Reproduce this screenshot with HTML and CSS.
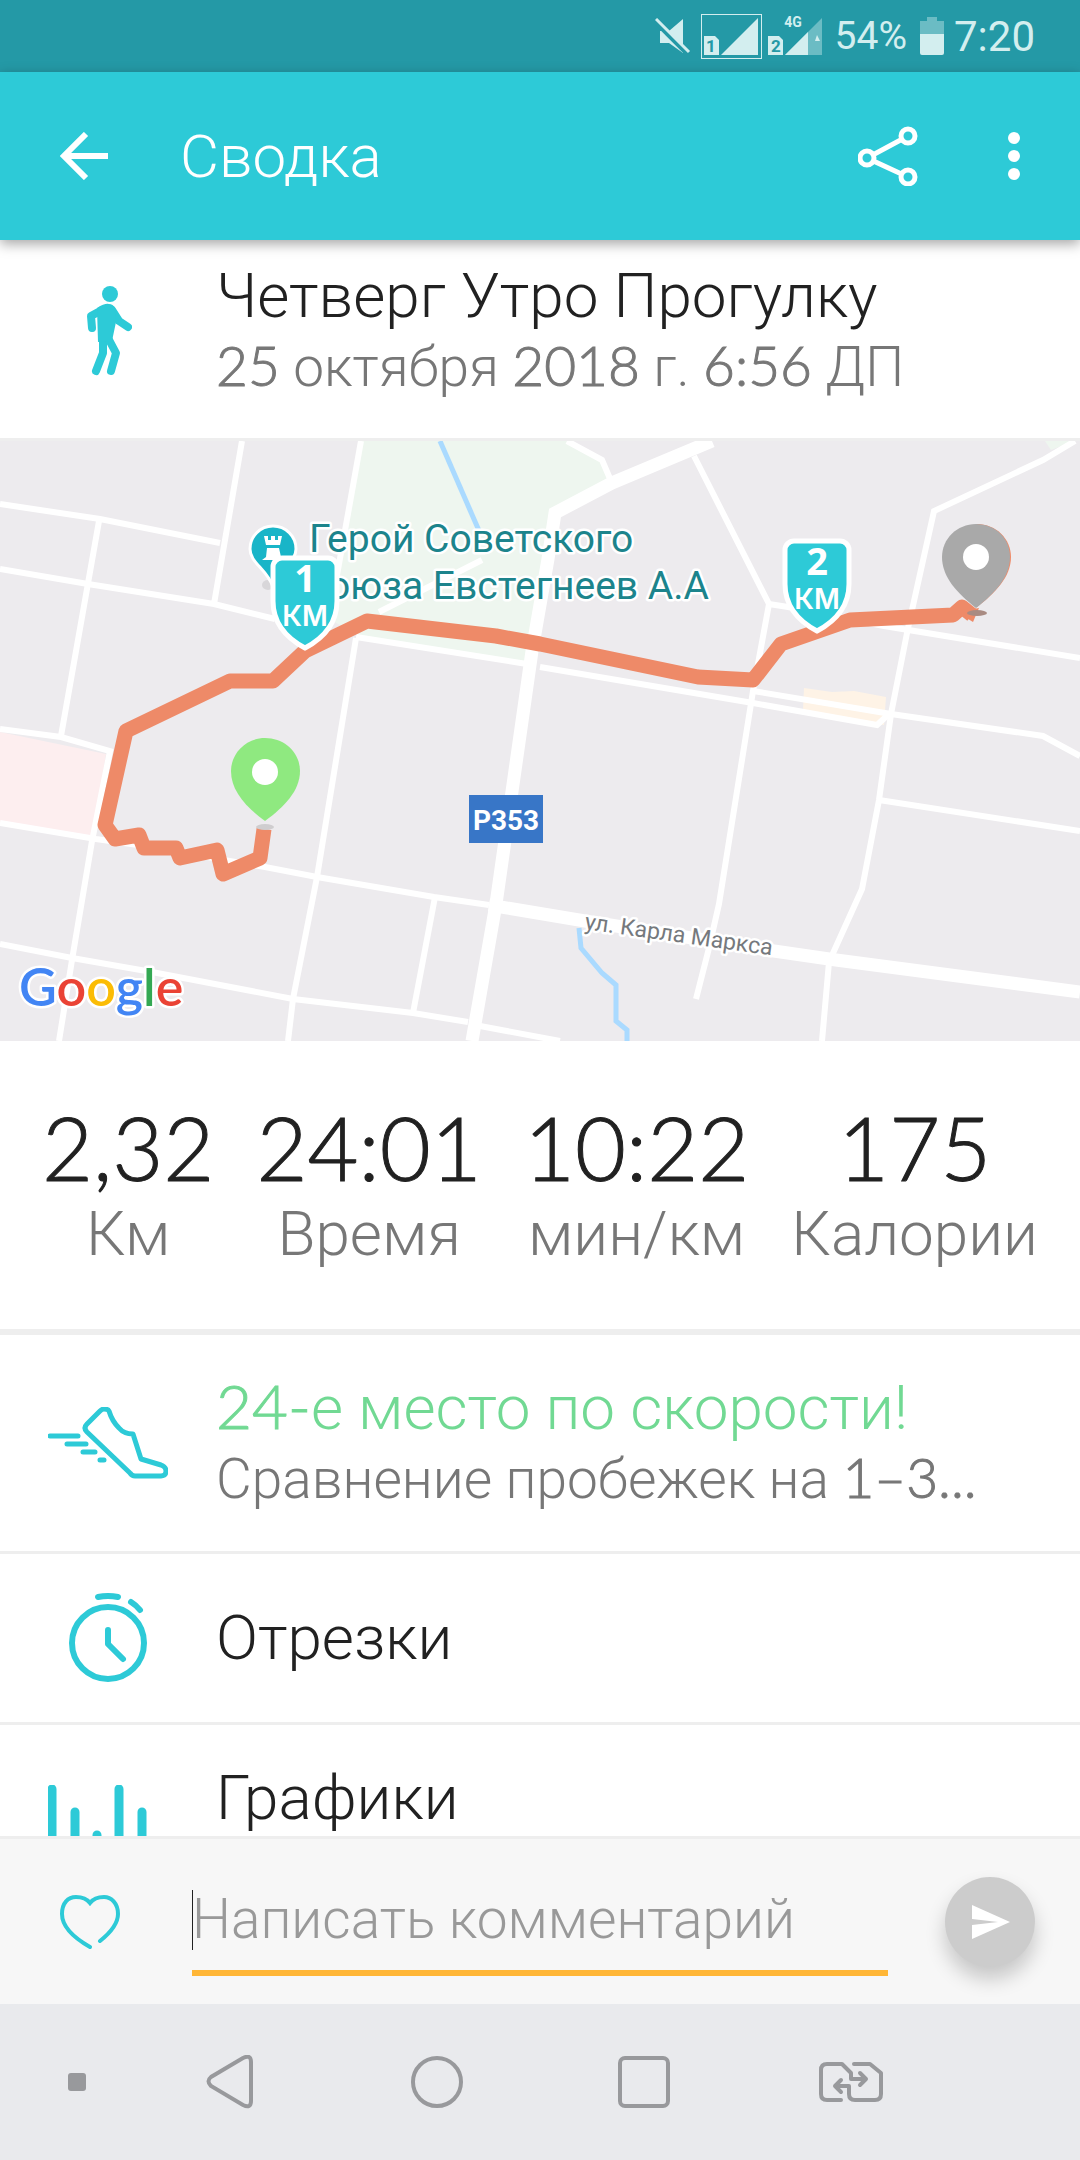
FILE: index.html
```html
<!DOCTYPE html>
<html lang="ru">
<head>
  <meta charset="UTF-8">
  <title>Сводка</title>
  <meta name="viewport" content="width=device-width, initial-scale=1.0">
  <link rel="stylesheet" href="styles.css">
</head>
<body>

  <!-- System status bar -->
  <div class="status-bar">
    <svg class="status-mute" width="36" height="36" viewBox="0 0 36 36">
      <path d="M5 13h9L28 1v34L14 25H5z" fill="#d3eeef"/>
      <path d="M0 4l33 33" stroke="#2499a6" stroke-width="4"/>
      <path d="M1 1l33 33" stroke="#d3eeef" stroke-width="3"/>
    </svg>
    <svg class="status-sim" width="61" height="45" viewBox="0 0 61 45">
      <rect x="0.5" y="0.5" width="60" height="44" fill="none" stroke="#d3eeef"/>
      <path d="M3 22h11l4 4v15H3z" fill="#d3eeef"/>
      <path d="M20 41L57 4v37z" fill="#d3eeef"/>
      <text x="10" y="38" class="sim-number">1</text>
    </svg>
    <svg class="status-sim" width="55" height="45" viewBox="0 0 55 45">
      <path d="M0 22h11l4 4v15H0z" fill="#d3eeef"/>
      <path d="M17 41L54 4v37z" fill="#6bbcc4"/>
      <path d="M17 41l23-23v23z" fill="#d3eeef"/>
      <path d="M47 27l2-6 3 6z" fill="#d3eeef"/>
      <text x="8" y="38" class="sim-number">2</text>
      <text x="25" y="13" class="sim-network">4G</text>
    </svg>
    <span class="battery-level">54%</span>
    <svg class="status-battery" width="24" height="38" viewBox="0 0 24 38">
      <path d="M7 0h10v4h7v14H0V4h7z" fill="#6bbcc4"/>
      <path d="M0 17h24v19a2 2 0 0 1-2 2H2a2 2 0 0 1-2-2z" fill="#d3eeef"/>
    </svg>
    <span class="clock">7:20</span>
  </div>

  <!-- App bar -->
  <header class="app-bar">
    <button class="icon-button back-button" aria-label="Назад">
      <svg width="48" height="48" viewBox="0 0 48 48">
        <path d="M48 24H6M26 2L4 24l22 22" fill="none" stroke="#fff" stroke-width="6"/>
      </svg>
    </button>
    <h1 class="app-title">Сводка</h1>
    <button class="icon-button" aria-label="Поделиться">
      <svg width="60" height="60" viewBox="0 0 60 60">
        <path d="M50 10L9 32l41 19" fill="none" stroke="#fff" stroke-width="5"/>
        <circle cx="50" cy="10" r="7" fill="#2dcad7" stroke="#fff" stroke-width="5"/>
        <circle cx="9" cy="32" r="7" fill="#2dcad7" stroke="#fff" stroke-width="5"/>
        <circle cx="50" cy="51" r="7" fill="#2dcad7" stroke="#fff" stroke-width="5"/>
      </svg>
    </button>
    <button class="icon-button menu-button" aria-label="Меню">
      <svg width="12" height="48" viewBox="0 0 12 48">
        <circle cx="6" cy="6" r="6" fill="#fff"/>
        <circle cx="6" cy="24" r="6" fill="#fff"/>
        <circle cx="6" cy="42" r="6" fill="#fff"/>
      </svg>
    </button>
  </header>

  <main class="content">

    <!-- Workout name and date -->
    <section class="row workout-row">
      <div class="row-icon">
        <svg width="48" height="90" viewBox="0 0 48 90">
          <g fill="none" stroke="#2dcad7" stroke-width="8" stroke-linecap="round" stroke-linejoin="round">
            <path d="M18 24L7 30l1 12"/>
            <path d="M28 24l7 11 9 6"/>
            <path d="M19 50v17l-7 18"/>
            <path d="M23 50l9 17-5 18"/>
          </g>
          <path d="M13 22q8-5 12-4 4 0 6 4l1 14-4 19-14 1z" fill="#2dcad7"/>
          <circle cx="26" cy="8" r="8" fill="#2dcad7"/>
        </svg>
      </div>
      <div class="row-text">
        <h2 class="row-title">Четверг Утро Прогулку</h2>
        <p class="row-subtitle"><span class="num">25</span> октября <span class="num">2018</span> г. <span class="num">6:56</span> ДП</p>
      </div>
    </section>

    <!-- Route map -->
    <svg class="map" viewBox="0 0 1080 600">
      <rect width="1080" height="600" fill="#edebee"/>
      <path d="M361 0h206l35 19 6 20-53 33-7 46-14 90-7 14-161-24-37-20z" fill="#eef6ef"/>
      <path d="M0 291l106 22-13 83-93-15z" fill="#fdeeef"/>
      <path d="M804 247l28 4 22-1 32 6-2 28-81-15z" fill="#fef3e6"/>
      <path d="M1045 0h30l-24 9z" fill="#eef6ef"/>

      <g fill="none" stroke="#aadaff" stroke-width="5">
        <path d="M440 0l40 92"/>
        <path d="M579 487l2 20 21 25 14 12v36l11 9v11"/>
      </g>

      <!-- Side streets -->
      <g fill="none" stroke="#fff" stroke-width="6">
        <path d="M0 63l100 15 120 24M0 128l88 15 126 20 61 15M242 0l-28 163M99 80L61 295"/>
        <path d="M361 0l-32 179M379 171l103-52"/>
        <path d="M0 288l61 8 49 14-18 90-20 119-13 81"/>
        <path d="M0 382l96 16 42 6 127 22 52 10 117 20 55 8M0 503l72 14 80 14 141 27 120 14 55 9M480 585l80 15"/>
        <path d="M356 197l-39 239-24 122-5 42M435 456l-22 116"/>
        <path d="M356 196l171 27M540 226l213 36 124 22 12-11"/>
        <path d="M753 250l138 23 152 22 37 20"/>
        <path d="M567 0l35 19 9 21M694 15l75 148-16 87-34 213-10 44-13 51M769 163l19 3 96 19 196 32"/>
        <path d="M1075 0l-32 19-109 51-26 117-17 86-12 86-17 89-33 73-7 79M879 359l201 31"/>
      </g>

      <!-- Main roads -->
      <g fill="none" stroke="#fff" stroke-width="13">
        <path d="M712 0L612 42l-57 30-7 46-16 92-36 253-24 137"/>
        <path d="M489 464l96 16 182 29 69 10 244 32"/>
      </g>

      <g class="poi-label">
        <text x="309" y="111">Герой Советского</text>
        <text x="709" y="158" text-anchor="end">оюза Евстегнеев А.А</text>
      </g>
      <text class="street-label" x="584" y="488" transform="rotate(8 584 488)">ул. Карла Маркса</text>
      <rect x="469" y="354" width="74" height="48" fill="#3876c7"/>
      <text class="road-number" x="506" y="389">Р353</text>

      <!-- Point of interest -->
      <ellipse cx="268" cy="144" rx="6" ry="5" fill="#d8d6d9"/>
      <path d="M273 85a23 23 0 0 1 23 23c0 14-17 20-23 38-6-18-23-24-23-38a23 23 0 0 1 23-23z" fill="#19b5c8" stroke="#fff" stroke-width="3"/>
      <path d="M264 95h4v4h3v-4h4v4h3v-4h4l-2 9h-14zM267 107h12l2 9 4 3h-23l4-3z" fill="#fff"/>

      <path class="route" d="M264 388l-4 29-37 16-6-24-37 8-4-10h-32l-5-13-24 4-10-14 21-94 104-50h43l32-30 62-30 129 15 44 8 158 33 55 3 28-36 69-24 103-5 9-8 10 8"/>

      <!-- Kilometre shields -->
      <g class="shield">
        <path d="M282 117h46a9 9 0 0 1 9 9v34q0 30-32 47-32-17-32-47v-34a9 9 0 0 1 9-9z"/>
        <text class="shield-number" x="305" y="151">1</text>
        <text class="shield-unit" x="305" y="185">КМ</text>
      </g>
      <g class="shield">
        <path d="M794 100h46a9 9 0 0 1 9 9v34q0 30-32 47-32-17-32-47v-34a9 9 0 0 1 9-9z"/>
        <text class="shield-number" x="817" y="134">2</text>
        <text class="shield-unit" x="817" y="168">КМ</text>
      </g>

      <!-- Start and finish pins -->
      <ellipse cx="265" cy="386" rx="9" ry="3" fill="#cfcdcf"/>
      <path d="M265 297c20 0 35 15 35 33 0 20-16 36-35 50-19-14-34-30-34-50 0-18 15-33 34-33z" fill="#8fe980"/>
      <circle cx="265" cy="331" r="13" fill="#fff"/>
      <path d="M969 169l10-2-6 14-8-5z" fill="#ee8a68"/>
      <ellipse cx="977" cy="172" rx="10" ry="3" fill="#a98b82"/>
      <path d="M977 83c19 0 34 15 34 33 0 20-16 36-34 50z" fill="#ee8a68"/>
      <path d="M976 83c20 0 34 15 34 33 0 20-15 36-34 51-19-15-34-31-34-51 0-18 15-33 34-33z" fill="#a9a9a9"/>
      <circle cx="976" cy="116" r="13" fill="#fff"/>

      <text class="map-logo" x="19" y="565"><tspan fill="#4285f4">G</tspan><tspan fill="#ea4335">o</tspan><tspan fill="#fbbc05">o</tspan><tspan fill="#4285f4">g</tspan><tspan fill="#34a853">l</tspan><tspan fill="#ea4335">e</tspan></text>
    </svg>

    <!-- Workout stats -->
    <section class="stats">
      <div class="stat">
        <span class="stat-value">2,32</span>
        <span class="stat-label">Км</span>
      </div>
      <div class="stat">
        <span class="stat-value">24:01</span>
        <span class="stat-label">Время</span>
      </div>
      <div class="stat">
        <span class="stat-value">10:22</span>
        <span class="stat-label">мин/км</span>
      </div>
      <div class="stat">
        <span class="stat-value">175</span>
        <span class="stat-label">Калории</span>
      </div>
    </section>

    <!-- Details list -->
    <section class="row">
      <div class="row-icon">
        <svg width="120" height="72" viewBox="0 0 120 72">
          <g fill="none" stroke="#2dcad7" stroke-width="5" stroke-linecap="round" stroke-linejoin="round">
            <path d="M52 4L39 17q-4 4 0 8l43 41q2 3 5 3h26q5 0 5-5 0-4-5-6l-20-6-8-25q-9 0-14-6-7-7-10-17-1-2-5-2-2 0-4 2z"/>
            <path d="M2 29h28M19 37h19M35 45h12M52 53h4"/>
          </g>
        </svg>
      </div>
      <div class="row-text">
        <h2 class="row-title highlight"><span class="num">24-</span>е место по скорости!</h2>
        <p class="row-subtitle">Сравнение пробежек на <span class="num">1–3...</span></p>
      </div>
    </section>

    <section class="row single-row">
      <div class="row-icon">
        <svg width="78" height="90" viewBox="0 0 78 90">
          <g fill="none" stroke="#2dcad7" stroke-width="6" stroke-linecap="round" stroke-linejoin="round">
            <circle cx="39" cy="50" r="36"/>
            <path d="M39 37v14l15 15"/>
            <path d="M29 4q10-2 20 0M62 9q5 3 9 8"/>
          </g>
        </svg>
      </div>
      <div class="row-text">
        <h2 class="row-title">Отрезки</h2>
      </div>
    </section>

    <section class="row charts-row">
      <div class="row-icon">
        <svg width="120" height="96" viewBox="0 0 120 96">
          <path d="M4 4v88M27 27v65M49 50v42M71 4v88M94 27v65" fill="none" stroke="#2dcad7" stroke-width="9" stroke-linecap="round"/>
        </svg>
      </div>
      <div class="row-text">
        <h2 class="row-title">Графики</h2>
      </div>
    </section>

  </main>

  <!-- Comment box -->
  <form class="composer">
    <button type="button" class="icon-button" aria-label="Нравится">
      <svg width="60" height="54" viewBox="0 0 60 54">
        <path d="M40 46C50 38 58 29 58 19 58 8 51 2 44 2c-6 0-11 2-14 6-3-4-8-6-14-6C8 2 2 8 2 19c0 14 14 25 28 33" fill="none" stroke="#2dcad7" stroke-width="4" stroke-linecap="round"/>
      </svg>
    </button>
    <div class="comment-field">
      <input type="text" class="comment-input" placeholder="Написать комментарий" aria-label="Написать комментарий">
    </div>
    <button type="button" class="send-button" aria-label="Отправить">
      <svg width="38" height="34" viewBox="0 0 38 34">
        <path d="M0 0l38 17L0 34V20l26-3L0 14z" fill="#fff"/>
      </svg>
    </button>
  </form>

  <!-- System navigation -->
  <nav class="nav-bar">
    <button class="icon-button nav-dot" aria-label="Скрыть панель"></button>
    <button class="icon-button" aria-label="Назад">
      <svg width="48" height="54" viewBox="0 0 48 54">
        <path d="M37 3L5 22q-5 4 0 9l32 19q8 4 8-4V7q0-8-8-4z" fill="none" stroke="#98999c" stroke-width="4"/>
      </svg>
    </button>
    <button class="icon-button" aria-label="Домой">
      <svg width="52" height="52" viewBox="0 0 52 52">
        <circle cx="26" cy="26" r="24" fill="none" stroke="#98999c" stroke-width="4"/>
      </svg>
    </button>
    <button class="icon-button" aria-label="Недавние">
      <svg width="52" height="52" viewBox="0 0 52 52">
        <rect x="2" y="2" width="48" height="48" rx="5" fill="none" stroke="#98999c" stroke-width="4"/>
      </svg>
    </button>
    <button class="icon-button" aria-label="Сменить SIM">
      <svg width="64" height="40" viewBox="0 0 64 40">
        <path d="M22 38H8q-6 0-6-6V8q0-6 6-6h15l9 9v6h15M41 11l6 6-6 6M35 2h16l11 9v21q0 6-6 6H36q-6 0-6-6v-8H16M22 18l-6 6 6 6" fill="none" stroke="#98999c" stroke-width="4" stroke-linecap="round" stroke-linejoin="round"/>
      </svg>
    </button>
  </nav>

</body>
</html>
```
FILE: styles.css
```css
/* Reset */
body, h1, h2, p {
  margin: 0;
  padding: 0;
}

* {
  box-sizing: border-box;
}

body {
  display: flex;
  flex-direction: column;
  height: 100vh;
  font-family: Roboto, "Open Sans", sans-serif;
  font-weight: 300;
  color: #212121;
  background-color: #fff;
}

svg {
  display: block;
}

.icon-button {
  padding: 0;
  border: none;
  background: none;
}

/* Digits use a different face from the letters */
.num,
.stat-value {
  font-family: Lato, Roboto, sans-serif;
  font-weight: 300;
  line-height: 1;
  -webkit-text-stroke: 1px currentColor;
}

/* Status bar */
.status-bar {
  flex: none;
  display: flex;
  justify-content: flex-end;
  align-items: center;
  height: 72px;
  padding-right: 45px;
  background-color: #2499a6;
  color: #d3eeef;
  font-weight: 400;
}

.status-mute {
  margin-right: 10px;
}

.status-sim {
  margin-right: 6px;
}

.sim-number {
  font-size: 17px;
  font-weight: 700;
  text-anchor: middle;
  fill: #2499a6;
}

.sim-network {
  font-size: 14px;
  font-weight: 700;
  text-anchor: middle;
  fill: #d3eeef;
}

.battery-level {
  margin: 0 13px 0 6px;
  font-size: 39px;
}

.clock {
  margin-left: 10px;
  font-size: 42px;
}

/* App bar */
.app-bar {
  position: relative;
  z-index: 1;
  flex: none;
  display: flex;
  align-items: center;
  height: 168px;
  padding: 0 60px;
  background-color: #2dcad7;
  box-shadow: 0 4px 12px rgba(0, 0, 0, 0.35);
}

.app-title {
  flex: 1;
  margin-left: 72px;
  font-size: 60px;
  font-weight: 300;
  color: #fff;
}

.menu-button {
  margin-left: 90px;
}

/* Scrolling content */
.content {
  flex: 1;
  min-height: 0;
  overflow-y: auto;
  scrollbar-width: none;
}

.row {
  display: flex;
  align-items: center;
  gap: 48px;
  padding: 37px 48px;
  border-bottom: 3px solid #eee;
}

.workout-row {
  padding-top: 20px;
  padding-bottom: 36px;
}

.row-icon {
  flex: none;
  display: flex;
  justify-content: center;
  width: 120px;
}

.row-text {
  flex: 1;
  min-width: 0;
}

.row-title {
  font-size: 62px;
  font-weight: 300;
  line-height: 72px;
  white-space: nowrap;
}

.row-title.highlight {
  color: #71d993;
}

.row-subtitle {
  font-size: 55px;
  line-height: 70px;
  color: #777;
  white-space: nowrap;
}

.single-row {
  min-height: 171px;
}

.charts-row {
  min-height: 219px;
}

.charts-row .row-text {
  align-self: flex-start;
}

/* Map */
.map {
  width: 100%;
}

.poi-label {
  font-size: 39px;
  font-weight: 400;
  fill: #1c848c;
  stroke: #fff;
  stroke-width: 5px;
  stroke-linejoin: round;
  paint-order: stroke;
}

.street-label {
  font-size: 23px;
  font-weight: 400;
  fill: #75797d;
  stroke: #fff;
  stroke-width: 5px;
  stroke-linejoin: round;
  paint-order: stroke;
}

.road-number {
  font-size: 28px;
  font-weight: 700;
  text-anchor: middle;
  fill: #fff;
}

.route {
  fill: none;
  stroke: #ee8a68;
  stroke-width: 15px;
  stroke-linejoin: round;
}

.shield path {
  fill: #2dcad7;
  stroke: #fff;
  stroke-width: 5px;
}

.shield text {
  text-anchor: middle;
  fill: #fff;
}

.shield-number {
  font-family: "Open Sans", sans-serif;
  font-size: 38px;
  font-weight: 700;
}

.shield-unit {
  font-family: Inter, sans-serif;
  font-size: 28px;
  font-weight: 600;
}

.map-logo {
  font-family: Lato, sans-serif;
  font-size: 52px;
  font-weight: 600;
  stroke: #fff;
  stroke-width: 5px;
  stroke-linejoin: round;
  paint-order: stroke;
}

/* Stats */
.stats {
  display: flex;
  justify-content: space-between;
  padding: 62px 42px 59px;
  border-bottom: 6px solid #eee;
}

.stat {
  display: flex;
  flex-direction: column;
  align-items: center;
  gap: 7px;
}

.stat-value {
  font-size: 88px;
}

.stat-label {
  font-size: 62px;
  line-height: 72px;
  color: #777;
}

/* Comment box */
.composer {
  flex: none;
  display: flex;
  align-items: center;
  height: 168px;
  padding: 0 45px 0 60px;
  border-top: 3px solid #eee;
  background-color: #f7f7f7;
}

.comment-field {
  position: relative;
  flex: 1;
  margin: 0 57px 0 72px;
}

/* Text cursor */
.comment-field::before {
  content: "";
  position: absolute;
  left: 0;
  top: 22px;
  width: 1px;
  height: 60px;
  background-color: #212121;
}

.comment-input {
  display: block;
  width: 100%;
  height: 108px;
  padding: 0;
  border: none;
  border-bottom: 6px solid #ffb636;
  background: none;
  font: inherit;
  font-size: 55px;
  outline: none;
}

.comment-input::placeholder {
  color: #999;
}

.send-button {
  display: flex;
  align-items: center;
  justify-content: center;
  width: 90px;
  height: 90px;
  padding: 0 0 0 2px;
  border: none;
  border-radius: 50%;
  background-color: #ccc;
  box-shadow: 0 12px 20px rgba(0, 0, 0, 0.2);
}

/* System navigation */
.nav-bar {
  flex: none;
  display: grid;
  grid-template-columns: 126fr 207fr 207fr 207fr 207fr 126fr;
  align-items: center;
  justify-items: center;
  height: 156px;
  background-color: #e9eaed;
}

.nav-dot {
  justify-self: end;
  width: 18px;
  height: 18px;
  margin-right: 40px;
  border-radius: 3px;
  background-color: #98999c;
}
```
